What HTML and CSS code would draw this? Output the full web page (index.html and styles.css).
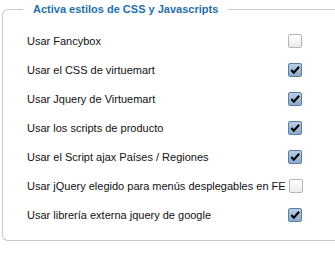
FILE: index.html
```html
<!DOCTYPE html>
<html>
<head>
<meta charset="utf-8">
<link rel="stylesheet" href="styles.css">
</head>
<body>
<fieldset class="box">
  <legend class="title">Activa estilos de CSS y Javascripts</legend>
  <div class="rows">
    <div class="row"><span class="label">Usar Fancybox</span><span class="cb"></span></div>
    <div class="row"><span class="label">Usar el CSS de virtuemart</span><span class="cb on"><svg viewBox="0 0 13 13"><path d="M2.5 6.5 L5.2 9.5 L11 3" fill="none" stroke="#000" stroke-width="2.2"/></svg></span></div>
    <div class="row"><span class="label">Usar Jquery de Virtuemart</span><span class="cb on"><svg viewBox="0 0 13 13"><path d="M2.5 6.5 L5.2 9.5 L11 3" fill="none" stroke="#000" stroke-width="2.2"/></svg></span></div>
    <div class="row"><span class="label">Usar los scripts de producto</span><span class="cb on"><svg viewBox="0 0 13 13"><path d="M2.5 6.5 L5.2 9.5 L11 3" fill="none" stroke="#000" stroke-width="2.2"/></svg></span></div>
    <div class="row"><span class="label">Usar el Script ajax Países / Regiones</span><span class="cb on"><svg viewBox="0 0 13 13"><path d="M2.5 6.5 L5.2 9.5 L11 3" fill="none" stroke="#000" stroke-width="2.2"/></svg></span></div>
    <div class="row"><span class="label">Usar jQuery elegido para menús desplegables en FE</span><span class="cb"></span></div>
    <div class="row"><span class="label">Usar librería externa jquery de google</span><span class="cb on"><svg viewBox="0 0 13 13"><path d="M2.5 6.5 L5.2 9.5 L11 3" fill="none" stroke="#000" stroke-width="2.2"/></svg></span></div>
  </div>
</fieldset>
</body>
</html>
```

FILE: styles.css
```css
html, body {
  margin: 0;
  padding: 0;
  background: #fff;
}
body {
  font-family: "Liberation Sans", Arial, sans-serif;
  font-size: 11px;
  color: #111;
  width: 335px;
  height: 254px;
  overflow: hidden;
}
.box {
  margin: 3px 0 0 2px;
  width: 333px;
  box-sizing: border-box;
  border: 1px solid #c8c8c8;
  border-right: none;
  border-radius: 6px 0 0 6px;
  padding: 0 0 14px 0;
  height: 238px;
}
.title {
  margin-left: 20px;
  padding: 0 10px;
  font-weight: bold;
  font-size: 11px;
  color: #1f6fae;
}
.rows {
  display: flex;
  flex-direction: column;
  padding: 11px 0 0 24px;
  width: 275px;
}
.row {
  height: 29px;
  display: flex;
  align-items: center;
  justify-content: space-between;
  white-space: nowrap;
}
.cb {
  width: 12px;
  height: 12px;
  border: 1px solid #b4b4b4;
  border-radius: 2px;
  background: linear-gradient(#ffffff, #ececec);
  box-sizing: content-box;
  display: flex;
  margin-left: 3px;
  flex-shrink: 0;
}
.cb.on {
  border-color: #5b7ea3;
  background: linear-gradient(#b8cde3, #8eabcb);
}
.cb svg {
  width: 12px;
  height: 12px;
}
```
